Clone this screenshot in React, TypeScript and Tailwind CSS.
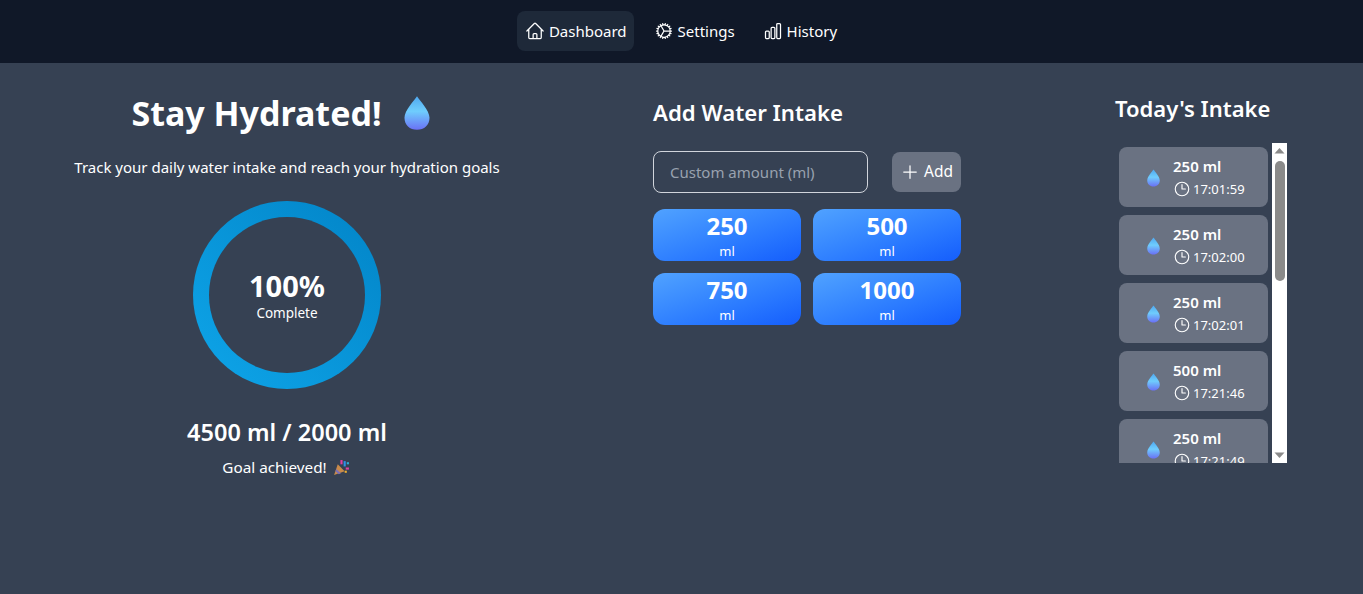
import { HiOutlineHome, HiOutlineCog, HiOutlineChartBar, HiOutlineClock, HiOutlinePlus } from "react-icons/hi2"

const quick = [250, 500, 750, 1000]

const log = [
  { ml: 250, time: "17:01:59" },
  { ml: 250, time: "17:02:00" },
  { ml: 250, time: "17:02:01" },
  { ml: 500, time: "17:21:46" },
  { ml: 250, time: "17:21:49" },
]

function Drop({ className }: { className: string }) {
  return (
    <svg viewBox="0 0 27 36" className={className}>
      <defs>
        <linearGradient id="drop" x1="0.5" y1="0" x2="0.5" y2="1">
          <stop offset="0" stopColor="#4fa8f0" />
          <stop offset="0.45" stopColor="#6fcdfd" />
          <stop offset="1" stopColor="#6a71f5" />
        </linearGradient>
      </defs>
      <path d="M13.5 0.5C16 4.5 26.5 15 26.5 23C26.5 30.5 21 35.5 13.5 35.5C6 35.5 0.5 30.5 0.5 23C0.5 15 11 4.5 13.5 0.5Z" fill="url(#drop)" />
    </svg>
  )
}

function Popper() {
  return (
    <svg viewBox="0 0 16 16" className="w-[17px] h-[17px]">
      <path d="M1 15L4.5 5L11 11.5Z" fill="#c98a4a" />
      <path d="M3 9.5L7.5 13.5L5.5 14.3L2.3 11.5Z" fill="#7a6fb8" />
      <rect x="7" y="1" width="2" height="4" fill="#e040a0" />
      <rect x="10" y="2" width="2" height="5" fill="#2f8fe8" />
      <rect x="12" y="8" width="3" height="2" fill="#e040a0" />
      <rect x="13" y="3" width="2" height="2" fill="#2fb0d8" />
      <rect x="11" y="11" width="2" height="2" fill="#f0b030" />
    </svg>
  )
}

export default function App() {
  return (
    <div className="min-h-[594px] bg-gray-700 text-white [font-family:'Noto_Sans',sans-serif]">
      <nav className="h-[63px] bg-gray-900 flex items-center justify-center gap-[4px] pb-[1px] pl-[3px]">
        <a className="flex items-center gap-[4px] h-10 pl-2 pr-[7px] mr-[4px] rounded-lg bg-gray-800 text-[15px]"><HiOutlineHome className="w-5 h-5" />Dashboard</a>
        <a className="flex items-center gap-[4px] h-10 px-3 rounded-lg text-[15px]"><HiOutlineCog className="w-5 h-5" />Settings</a>
        <a className="flex items-center gap-[4px] h-10 px-3 rounded-lg text-[15px]"><HiOutlineChartBar className="w-5 h-5" />History</a>
      </nav>

      <main className="flex">
        <section className="w-[574px] flex flex-col items-center pt-[24px]">
          <h1 className="flex items-center gap-[22px] pr-[13px] text-[34px] leading-[52px] font-bold">
            Stay Hydrated!
            <Drop className="w-[26px] h-[36px]" />
          </h1>
          <p className="mt-[16px] text-[15px] leading-6">Track your daily water intake and reach your hydration goals</p>
          <div className="mt-[22px] w-[188px] h-[188px] rounded-full bg-[linear-gradient(45deg,#0ea5e9,#0284c7)] p-4">
            <div className="w-full h-full rounded-full bg-gray-700 flex flex-col items-center justify-center pt-[1px]">
              <div className="text-[29px] leading-9 font-bold">100%</div>
              <div className="text-[13.5px] leading-5 -translate-y-px">Complete</div>
            </div>
          </div>
          <div className="mt-[27px] text-[23.5px] leading-8 font-semibold">4500 ml / 2000 ml</div>
          <div className="mt-[7px] flex items-center gap-[6px] pr-[2px] text-[15.3px] leading-6">Goal achieved!<Popper /></div>
        </section>

        <section className="ml-[79px] w-[308px] pt-[32px]">
          <h2 className="text-[22.2px] leading-9 font-semibold">Add Water Intake</h2>
          <div className="mt-[20px] flex items-center gap-6">
            <input placeholder="Custom amount (ml)" className="w-[215px] h-[42px] px-4 rounded-lg border border-gray-300 bg-transparent text-[15px] placeholder:text-gray-400 outline-none" />
            <button className="w-[69px] h-10 rounded-lg bg-gray-500 flex items-center justify-end pr-2 gap-1 text-[15.5px]"><HiOutlinePlus className="w-5 h-5" />Add</button>
          </div>
          <div className="mt-4 grid grid-cols-2 gap-3">
            {quick.map((n) => (
              <button key={n} className="h-[52px] rounded-xl bg-gradient-to-br from-blue-400 to-blue-600 flex flex-col items-center justify-center pt-[1px]">
                <span className="text-2xl leading-8 font-bold">{n}</span>
                <span className="text-[13px] leading-5 -translate-y-px">ml</span>
              </button>
            ))}
          </div>
        </section>

        <section className="ml-[154px] w-[172px] pt-[27px]">
          <h2 className="text-[22px] leading-9 font-semibold whitespace-nowrap">Today's Intake</h2>
          <div className="mt-[17px] flex h-[320px] pl-1">
            <div className="flex-1 overflow-hidden flex flex-col gap-2 pt-1">
              {log.map((e, i) => (
                <div key={i} className="shrink-0 h-[60px] w-[149px] rounded-lg bg-gray-500 flex items-center pl-7 gap-[13px]">
                  <Drop className="w-[13px] h-[18px] mt-[2px]" />
                  <div>
                    <div className="text-[15px] leading-6 font-semibold -translate-y-px">{e.ml} ml</div>
                    <div className="flex items-center gap-[2px] text-[13px] leading-5"><HiOutlineClock className="w-[18px] h-[18px]" />{e.time}</div>
                  </div>
                </div>
              ))}
            </div>
            <div className="ml-1 w-[15px] bg-white flex flex-col items-center">
              <svg viewBox="0 0 15 15" className="w-[15px] h-[15px]"><path d="M2.5 10.5L7.5 5L12.5 10.5Z" fill="#8a8a8a" /></svg>
              <div className="w-[10px] h-[120px] rounded-full bg-[#8a8a8a] mt-[3px]"></div>
              <svg viewBox="0 0 15 15" className="w-[15px] h-[15px] mt-auto"><path d="M2.5 4.5L7.5 10L12.5 4.5Z" fill="#8a8a8a" /></svg>
            </div>
          </div>
        </section>
      </main>
    </div>
  )
}
